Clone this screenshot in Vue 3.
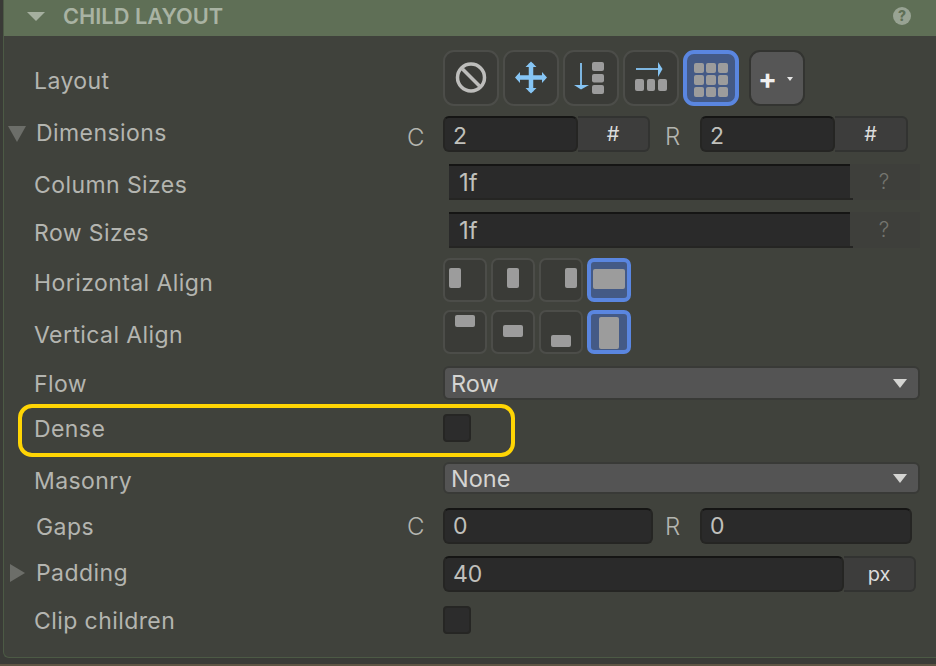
<script setup>
const hAlign = [
  { x: 6, y: 8, w: 12, h: 20 },
  { x: 16, y: 8, w: 12, h: 20 },
  { x: 26, y: 8, w: 12, h: 20 },
  { x: 6, y: 9, w: 32, h: 20, on: true }
]
const vAlign = [
  { x: 12, y: 5, w: 20, h: 12 },
  { x: 12, y: 15, w: 20, h: 12 },
  { x: 12, y: 25, w: 20, h: 12 },
  { x: 12, y: 7, w: 20, h: 32, on: true }
]
const gridCells = [7, 19, 31].flatMap((x) => [8, 20, 32].map((y) => ({ x, y })))
</script>

<template>
  <div class="panel">
    <div class="header">
      <span class="head-arrow"></span>
      <span class="head-title">CHILD LAYOUT</span>
      <span class="help">?</span>
    </div>

    <div class="body">
      <div class="row r-layout">
        <label class="down">Layout</label>
        <div class="tools">
          <button class="tool">
            <svg width="36" height="36" viewBox="0 0 36 36">
              <circle cx="18" cy="17.5" r="13.5" fill="none" stroke="#bdbdbb" stroke-width="3.5" />
              <path d="M9.5 9 26.5 26" stroke="#bdbdbb" stroke-width="3.5" />
            </svg>
          </button>
          <button class="tool">
            <svg width="36" height="36" viewBox="0 0 36 36">
              <path d="M4 17.5H32M18 3.5V31.5" stroke="#86c5f4" stroke-width="4.5" />
              <path d="M18 1.5 23.5 7H12.5ZM18 33.5 23.5 28H12.5ZM2 17.5 7 12V23ZM34 17.5 29 12V23Z" fill="#86c5f4" />
            </svg>
          </button>
          <button class="tool">
            <svg width="36" height="36" viewBox="0 0 36 36">
              <path d="M8 3V27" stroke="#86c5f4" stroke-width="1.8" />
              <path d="M1 25H16L8 29.5Z" fill="#86c5f4" />
              <rect x="19" y="2" width="12" height="9" rx="2" fill="#9c9c9c" />
              <rect x="19" y="14" width="12" height="8.5" rx="2" fill="#9c9c9c" />
              <rect x="19" y="25" width="12" height="9" rx="2" fill="#9c9c9c" />
            </svg>
          </button>
          <button class="tool">
            <svg width="36" height="36" viewBox="0 0 36 36">
              <path d="M3 9H27" stroke="#86c5f4" stroke-width="1.8" />
              <path d="M25 2 29.5 9 25 17Z" fill="#86c5f4" />
              <rect x="2" y="19" width="9" height="12" rx="2" fill="#9c9c9c" />
              <rect x="14" y="19" width="8" height="12" rx="2" fill="#9c9c9c" />
              <rect x="25" y="19" width="9" height="12" rx="2" fill="#9c9c9c" />
            </svg>
          </button>
          <button class="tool on">
            <svg width="46" height="46" viewBox="0 0 46 46">
              <rect v-for="c in gridCells" :key="c.x + '-' + c.y" :x="c.x - 1" :y="c.y" width="10" height="10" rx="2" fill="#9c9c9c" />
            </svg>
          </button>
          <button class="add">
            <span class="plus">+</span>
            <span class="mini-arrow"></span>
          </button>
        </div>
      </div>

      <div class="row r-dim">
        <span class="arrow-down"></span>
        <label class="strong up">Dimensions</label>
        <span class="axis">C</span>
        <div class="field w135 low"><span>2</span></div>
        <div class="unit w72">#</div>
        <span class="axis axis-r">R</span>
        <div class="field w135 low"><span>2</span></div>
        <div class="unit w73">#</div>
      </div>

      <div class="row r-size">
        <label class="down">Column Sizes</label>
        <div class="field flat"><span>1f</span></div>
        <div class="unit ghost">?</div>
      </div>
      <div class="row r-size">
        <label class="down">Row Sizes</label>
        <div class="field flat"><span>1f</span></div>
        <div class="unit ghost">?</div>
      </div>

      <div class="row r-halign">
        <label class="down">Horizontal Align</label>
        <div class="aligns">
          <div v-for="(b, i) in hAlign" :key="i" class="align" :class="{ on: b.on }">
            <svg width="44" height="44" viewBox="0 0 44 44">
              <rect :x="b.x" :y="b.y + 2" :width="b.w" :height="b.h" rx="2" fill="#9c9c9c" />
            </svg>
          </div>
        </div>
      </div>
      <div class="row r-valign">
        <label class="down">Vertical Align</label>
        <div class="aligns">
          <div v-for="(b, i) in vAlign" :key="i" class="align" :class="{ on: b.on }">
            <svg width="44" height="44" viewBox="0 0 44 44">
              <rect :x="b.x" :y="b.y" :width="b.w" :height="b.h" rx="2" fill="#9c9c9c" />
            </svg>
          </div>
        </div>
      </div>

      <div class="row r-flow">
        <label>Flow</label>
        <div class="select"><span>Row</span><i></i></div>
      </div>

      <div class="row r-dense">
        <label>Dense</label>
        <div class="check"></div>
        <div class="highlight"></div>
      </div>

      <div class="row r-masonry">
        <label class="down">Masonry</label>
        <div class="select"><span>None</span><i></i></div>
      </div>

      <div class="row r-gaps">
        <label class="strong">Gaps</label>
        <span class="axis">C</span>
        <div class="field w210"><span>0</span></div>
        <span class="axis axis-r">R</span>
        <div class="field w212"><span>0</span></div>
      </div>

      <div class="row r-padding">
        <span class="arrow-right"></span>
        <label class="strong up">Padding</label>
        <div class="field w401"><span>40</span></div>
        <div class="unit w72">px</div>
      </div>

      <div class="row r-clip">
        <label>Clip children</label>
        <div class="check"></div>
      </div>
    </div>
  </div>
  <div class="next-panel"></div>
</template>

<style>
html,
body {
  margin: 0;
  background: #3a3b37;
  overflow: hidden;
}
</style>

<style scoped>
.panel {
  margin-left: 3px;
  height: 658px;
  box-sizing: border-box;
  background: #40423c;
  border-left: 1px solid #4c5a45;
  border-bottom: 1px solid #4c5a45;
  border-bottom-left-radius: 6px;
  font-family: Inter, "Liberation Sans", sans-serif;
  color: #b4b5b0;
}

.next-panel {
  margin-top: 6px;
  height: 2px;
  background: #5d5443;
}

.header {
  height: 36px;
  background: #5f6f56;
  display: flex;
  align-items: center;
  position: relative;
}

.head-arrow {
  width: 0;
  height: 0;
  margin-left: 23px;
  margin-top: -4px;
  border-left: 9px solid transparent;
  border-right: 9px solid transparent;
  border-top: 9px solid #a5af9f;
}

.head-title {
  margin-left: 18px;
  font-size: 21.8px;
  font-weight: 600;
  color: #a9b3a3;
  margin-top: -5px;
}

.help {
  margin-left: auto;
  margin-right: 25px;
  margin-top: -4px;
  width: 18px;
  height: 18px;
  border-radius: 50%;
  background: #98a393;
  color: #5f6f56;
  font-size: 14px;
  font-weight: 800;
  line-height: 18px;
  text-align: center;
}

.body {
  padding-top: 14px;
}

.row {
  display: flex;
  align-items: center;
  position: relative;
  padding-left: 439px;
}

.row label {
  position: absolute;
  left: 30px;
  margin-top: 2px;
  font-size: 23px;
  letter-spacing: 0.42px;
  white-space: nowrap;
}

.row label.strong {
  left: 32px;
}

/* nudges for the label baseline, the source rows are not quite centred */
.row label.down {
  padding-top: 4px;
}

.row label.up {
  padding-bottom: 4px;
}

.r-layout {
  height: 56px;
}
.r-dim {
  height: 36px;
  margin-top: 10px;
}
.r-size {
  height: 36px;
  margin-top: 12px;
  padding-left: 445px;
}
.r-halign {
  height: 44px;
  margin-top: 10px;
}
.r-valign {
  height: 44px;
  margin-top: 8px;
}
.r-flow {
  height: 34px;
  margin-top: 12px;
}
.r-dense {
  height: 28px;
  margin-top: 14px;
}
.r-masonry {
  height: 32px;
  margin-top: 20px;
}
.r-gaps {
  height: 36px;
  margin-top: 14px;
}
.r-padding {
  height: 36px;
  margin-top: 12px;
}
.r-clip {
  height: 28px;
  margin-top: 14px;
}

.tools {
  display: flex;
  gap: 4px;
}

.tool {
  width: 56px;
  height: 56px;
  box-sizing: border-box;
  padding: 0;
  background: #3a3b37;
  border: 2px solid #4c4d49;
  border-radius: 11px;
  display: flex;
  align-items: center;
  justify-content: center;
}

.tool.on {
  background: #445a86;
  border: 4px solid #5a86e0;
}

.add {
  width: 56px;
  height: 56px;
  box-sizing: border-box;
  margin-left: 6px;
  padding: 0;
  background: #565656;
  border: 2px solid #333431;
  border-radius: 11px;
  position: relative;
  font-family: inherit;
}

.plus {
  position: absolute;
  left: 7px;
  top: 11px;
  color: #f0f0f0;
  font-size: 28px;
  font-weight: 700;
  line-height: 32px;
}

.mini-arrow {
  position: absolute;
  left: 36px;
  top: 25px;
  width: 0;
  height: 0;
  border-left: 3px solid transparent;
  border-right: 3px solid transparent;
  border-top: 4px solid #e6e6e6;
}

.arrow-down {
  position: absolute;
  left: 4px;
  top: 10px;
  width: 0;
  height: 0;
  border-left: 9px solid transparent;
  border-right: 9px solid transparent;
  border-top: 16px solid #6c6e69;
}

.arrow-right {
  position: absolute;
  left: 6px;
  top: 8px;
  width: 0;
  height: 0;
  border-top: 9px solid transparent;
  border-bottom: 9px solid transparent;
  border-left: 15px solid #6c6e69;
}

.axis {
  position: absolute;
  left: 403px;
  top: 7px;
  font-size: 24px;
  font-weight: 300;
  color: #b4b5b0;
}

.axis-r {
  position: static;
  width: 45px;
  padding-right: 5px;
  text-align: center;
  padding-top: 5px;
}

.r-gaps .axis {
  top: 4px;
}

.r-gaps .axis-r {
  padding-top: 0;
  width: 39px;
  padding-right: 8px;
}

.field {
  height: 36px;
  box-sizing: border-box;
  background: #2a2a2a;
  border: 2px solid #252523;
  border-top-color: #151514;
  border-radius: 6px;
  font-size: 23px;
  color: #c0c0bc;
  padding-left: 8px;
  display: flex;
  align-items: center;
}

.field.low span {
  padding-top: 4px;
}

.field.flat {
  width: 401px;
  border-radius: 0;
  border-left: 0;
  border-right: 0;
  font-size: 24px;
  padding-left: 10px;
  position: relative;
}

/* bottom edge runs a little past the field, under the ? button */
.field.flat::after {
  content: "";
  position: absolute;
  right: -3px;
  bottom: -2px;
  width: 3px;
  height: 2px;
  background: #252523;
}

.w135 {
  width: 135px;
}
.w210 {
  width: 210px;
}
.w212 {
  width: 212px;
}
.w401 {
  width: 401px;
}

.unit {
  height: 36px;
  box-sizing: border-box;
  background: #3d3d3c;
  border: 2px solid #323331;
  border-left: 0;
  border-radius: 0 6px 6px 0;
  font-size: 20px;
  color: #dcdcdc;
  display: flex;
  align-items: center;
  justify-content: center;
}

.w72 {
  width: 72px;
}
.w73 {
  width: 73px;
}

.unit.ghost {
  width: 70px;
  box-sizing: border-box;
  padding-right: 2px;
  padding-bottom: 2px;
  background: #3e3f3b;
  border: 0;
  color: #74756f;
  border-radius: 0;
  font-size: 21px;
  font-weight: 300;
}

.aligns {
  display: flex;
  gap: 4px;
}

.align {
  width: 44px;
  height: 44px;
  box-sizing: border-box;
  background: #3a3b37;
  border: 2px solid #4c4d49;
  border-radius: 7px;
  position: relative;
  overflow: hidden;
}

.align svg {
  position: absolute;
  left: -2px;
  top: -2px;
}

.align.on {
  background: #445a86;
  border: 4px solid #5a86e0;
}

.align.on svg {
  left: -4px;
  top: -4px;
}

.select {
  width: 477px;
  height: 100%;
  box-sizing: border-box;
  background: #545454;
  border: 2px solid #393a37;
  border-radius: 6px;
  padding-left: 6px;
  font-size: 23.5px;
  color: #d4d4d2;
  display: flex;
  align-items: center;
  justify-content: space-between;
}

.select i {
  width: 0;
  height: 0;
  margin-right: 11px;
  border-left: 7px solid transparent;
  border-right: 7px solid transparent;
  border-top: 9px solid #d4d4d2;
}

.check {
  width: 28px;
  height: 28px;
  box-sizing: border-box;
  background: #2c2c2c;
  border: 2px solid #262624;
  border-radius: 4px;
}

/* yellow annotation drawn over the Dense row */
.highlight {
  position: absolute;
  left: 14px;
  top: -10px;
  width: 497px;
  height: 53px;
  box-sizing: border-box;
  border: 4px solid #ffd504;
  border-radius: 14px;
}
</style>
